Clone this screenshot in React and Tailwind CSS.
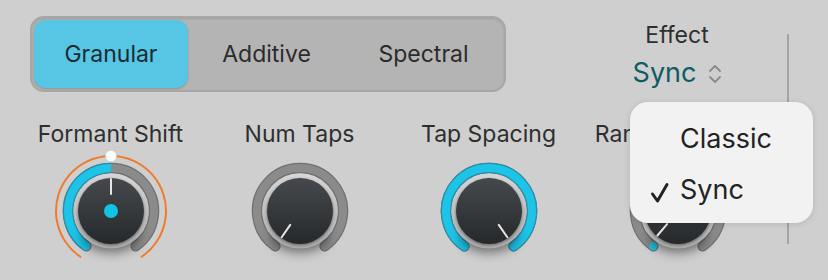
import React from "react";

const CX = 70;
const CY = 63;

function pt(r, a) {
  const rad = (a * Math.PI) / 180;
  return [CX + r * Math.sin(rad), CY - r * Math.cos(rad)];
}

function arc(r, a0, a1) {
  const [x0, y0] = pt(r, a0);
  const [x1, y1] = pt(r, a1);
  const large = a1 - a0 > 180 ? 1 : 0;
  return `M ${x0.toFixed(2)} ${y0.toFixed(2)} A ${r} ${r} 0 ${large} 1 ${x1.toFixed(2)} ${y1.toFixed(2)}`;
}

function Knob({ id, blueTo, pointer, dot, mod, startDot }) {
  const S = -145;
  const E = 145;
  const [p0x, p0y] = pt(17, pointer);
  const [p1x, p1y] = pt(32, pointer);
  const [sx, sy] = pt(43, S);
  return (
    <svg width="140" height="128" viewBox="0 0 140 128">
      <defs>
        <linearGradient id={`body-${id}`} x1="0" y1="0" x2="0" y2="1">
          <stop offset="0" stopColor="#45494d" />
          <stop offset="1" stopColor="#26292c" />
        </linearGradient>
        <linearGradient id={`bez-${id}`} x1="0" y1="0" x2="0" y2="1">
          <stop offset="0" stopColor="#d6d6d6" />
          <stop offset="1" stopColor="#a9a9a9" />
        </linearGradient>
        <filter id={`sh-${id}`} x="-50%" y="-50%" width="200%" height="200%">
          <feGaussianBlur stdDeviation="6" />
        </filter>
        <filter id={`ds-${id}`} x="-50%" y="-50%" width="200%" height="200%">
          <feGaussianBlur stdDeviation="1" />
        </filter>
      </defs>
      {mod && (
        <path d={arc(55, -147, 147)} fill="none" stroke="#f07a2e" strokeWidth="2" />
      )}
      <path d={arc(43, S, E)} fill="none" stroke="#707070" strokeWidth="10.5" strokeLinecap="round" />
      <path d={arc(43, S, E)} fill="none" stroke="#8b8b8b" strokeWidth="8" strokeLinecap="round" />
      {blueTo !== null && blueTo > S && (
        <>
          <path d={arc(43, S, blueTo)} fill="none" stroke="#2a8fa8" strokeWidth="10.5" strokeLinecap={blueTo >= E ? "round" : "butt"} />
          <path d={arc(43, S, blueTo)} fill="none" stroke="#1ec4e8" strokeWidth="8" strokeLinecap={blueTo >= E ? "round" : "butt"} />
          <circle cx={sx} cy={sy} r="4" fill="#1ec4e8" />
        </>
      )}
      {startDot && <circle cx={sx} cy={sy} r="4" fill="#1ec4e8" />}
      <ellipse cx={CX} cy={CY + 25} rx="28" ry="16" fill="#000" opacity="0.5" filter={`url(#sh-${id})`} />
      <circle cx={CX} cy={CY} r="37.5" fill={`url(#bez-${id})`} />
      <circle cx={CX} cy={CY + 1} r="33.5" fill="#000" opacity="0.35" filter={`url(#ds-${id})`} />
      <circle cx={CX} cy={CY} r="33" fill={`url(#body-${id})`} />
      <line x1={p0x} y1={p0y} x2={p1x} y2={p1y} stroke="#e6e6e6" strokeWidth="2" strokeLinecap="round" />
      {dot && <circle cx={CX} cy={CY} r="7" fill="#12c3e6" />}
      {mod && (
        <circle cx={CX} cy={CY - 55} r="5.5" fill="#ffffff" stroke="#d0d0d0" strokeWidth="0.5" />
      )}
    </svg>
  );
}

function KnobCol({ label, children }) {
  return (
    <div className="w-[189px] flex flex-col items-center">
      <div className="text-[23px] leading-[28px] text-[#2e2e2e] whitespace-nowrap">{label}</div>
      {children}
    </div>
  );
}

export default function App() {
  return (
    <div
      className="relative w-[828px] h-[280px] overflow-hidden bg-[#cfcfcf] flex"
      style={{ fontFamily: "Inter, 'Noto Sans', sans-serif" }}
    >
      <div className="w-[787px] flex flex-col">
        <div className="flex items-start pt-[16px] pl-[30px]">
          <div className="w-[476px] h-[76px] rounded-[14px] bg-[#b4b4b4] border-2 border-[#a7a7a7] p-[2px] flex shadow-[inset_0_1px_2px_rgba(0,0,0,0.12)]">
            <div className="w-[154px] h-full rounded-[12px] bg-[#57c5e4] flex items-center justify-center text-[23px] text-[#1c2c32] shadow-[0_1px_2px_rgba(0,0,0,0.2)]">
              Granular
            </div>
            <div className="flex-1 flex items-center justify-center text-[23px] text-[#2b2b2b]">
              Additive
            </div>
            <div className="flex-1 flex items-center justify-center text-[23px] text-[#2b2b2b]">
              Spectral
            </div>
          </div>
          <div className="ml-[101px] mt-[5px] w-[140px] flex flex-col items-center">
            <div className="text-[23px] leading-[28px] text-[#2e2e2e]">Effect</div>
            <div className="mt-[8px] flex items-center gap-[12px] pl-[1px]">
              <span className="text-[27px] leading-[31px] text-[#0e5c64]">Sync</span>
              <svg width="14" height="20" viewBox="0 0 14 20" className="mt-[2px]">
                <path d="M2 7 L7 2 L12 7" fill="none" stroke="#8a8a8a" strokeWidth="1.8" strokeLinecap="round" strokeLinejoin="round" />
                <path d="M2 13 L7 18 L12 13" fill="none" stroke="#8a8a8a" strokeWidth="1.8" strokeLinecap="round" strokeLinejoin="round" />
              </svg>
            </div>
          </div>
        </div>
        <div className="flex mt-[28px] ml-[16px]">
          <KnobCol label="Formant Shift">
            <Knob id="a" blueTo={0} pointer={0} dot mod />
          </KnobCol>
          <KnobCol label="Num Taps">
            <Knob id="b" blueTo={null} pointer={-145} />
          </KnobCol>
          <KnobCol label="Tap Spacing">
            <Knob id="c" blueTo={145} pointer={145} />
          </KnobCol>
          <KnobCol label="Random Speed">
            <Knob id="d" blueTo={null} pointer={-140} startDot />
          </KnobCol>
        </div>
      </div>
      <div className="w-[2px] h-[210px] mt-[34px] bg-[#a4a4a4]" />

      <div className="absolute left-[630px] top-[102px] w-[183px] h-[121px] rounded-[18px] bg-[#f2f2f2] shadow-[0_1px_6px_rgba(0,0,0,0.12)] pt-[21px] flex flex-col gap-[19px]">
        <div className="flex items-center pl-[20px] h-[32px]">
          <div className="w-[30px]" />
          <span className="text-[27px] leading-[32px] text-[#222]">Classic</span>
        </div>
        <div className="flex items-center pl-[20px] h-[32px]">
          <div className="w-[30px] flex items-center">
            <svg width="20" height="22" viewBox="0 0 20 22" className="mt-[5px]">
              <path d="M2.5 12 L7.5 19 L17 2.5" fill="none" stroke="#222" strokeWidth="3" strokeLinecap="round" strokeLinejoin="round" />
            </svg>
          </div>
          <span className="text-[27px] leading-[32px] text-[#222]">Sync</span>
        </div>
      </div>
    </div>
  );
}
